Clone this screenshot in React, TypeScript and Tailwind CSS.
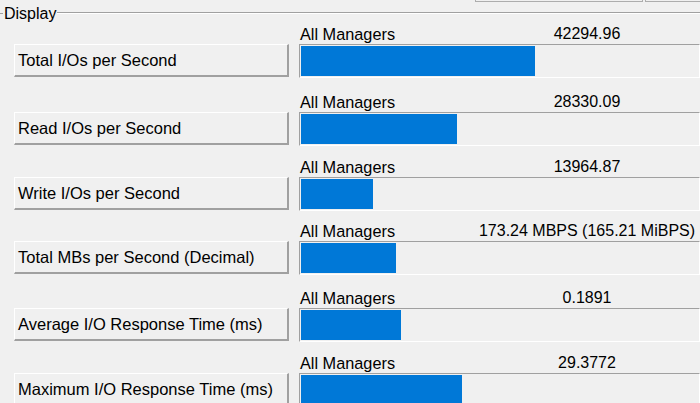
const rows = [
  { name: 'Total I/Os per Second', value: '42294.96', bar: 234, gap: 'mb-[13px]' },
  { name: 'Read I/Os per Second', value: '28330.09', bar: 156, gap: 'mb-[10px]' },
  { name: 'Write I/Os per Second', value: '13964.87', bar: 72, gap: 'mb-[9px]' },
  { name: 'Total MBs per Second (Decimal)', value: '173.24 MBPS (165.21 MiBPS)', bar: 95, gap: 'mb-[12px]' },
  { name: 'Average I/O Response Time (ms)', value: '0.1891', bar: 100, gap: 'mb-[10px]' },
  { name: 'Maximum I/O Response Time (ms)', value: '29.3772', bar: 161, gap: 'mb-0' },
];

function ResultRow({ name, value, bar, gap }: { name: string; value: string; bar: number; gap: string }) {
  return (
    <div className={`flex flex-col ${gap}`}>
      <div className="flex h-[21px] items-center pl-[300px] pt-px leading-[20px]">
        <span className="w-[175px] shrink-0 text-[16.3px]">All Managers</span>
        <span className="w-[224px] shrink-0 text-center">{value}</span>
      </div>
      <div className="flex items-start">
        <div className="ml-[14px] flex h-[33px] w-[275px] shrink-0 items-center border-t border-l border-b-2 border-r-2 border-t-white border-l-white border-b-[#a0a0a0] border-r-[#a0a0a0] bg-[#f0f0f0] pl-[3px] text-[16.5px]">
          {name}
        </div>
        <div className="ml-[10px] flex h-[34px] flex-1 border-t border-l border-b border-r border-t-[#a0a0a0] border-l-[#a0a0a0] border-b-white border-r-white p-px">
          <div className="h-full bg-[#0078d7]" style={{ width: bar }} />
        </div>
      </div>
    </div>
  );
}

export default function App() {
  return (
    <div className="h-[403px] w-[700px] overflow-hidden bg-[#f0f0f0] text-[16px] text-black" style={{ fontFamily: '"Liberation Sans", Arial, sans-serif' }}>
      {/* edge of the toolbar buttons above */}
      <div className="flex h-[3px] items-start">
        <div className="ml-[475px] h-[2px] w-[168px] border-x border-b border-[#adadad]" />
        <div className="ml-[2px] h-[2px] flex-1 border-l border-b border-[#adadad]" />
      </div>

      {/* group box header */}
      <div className="flex h-[20px] items-center">
        <div className="h-px w-[3px] bg-[#a0a0a0]" />
        <span className="px-px pt-px leading-[20px]">Display</span>
        <div className="flex-1 border-t border-b border-t-[#a0a0a0] border-b-white" />
      </div>

      {rows.map((r) => (
        <ResultRow key={r.name} {...r} />
      ))}
    </div>
  );
}
